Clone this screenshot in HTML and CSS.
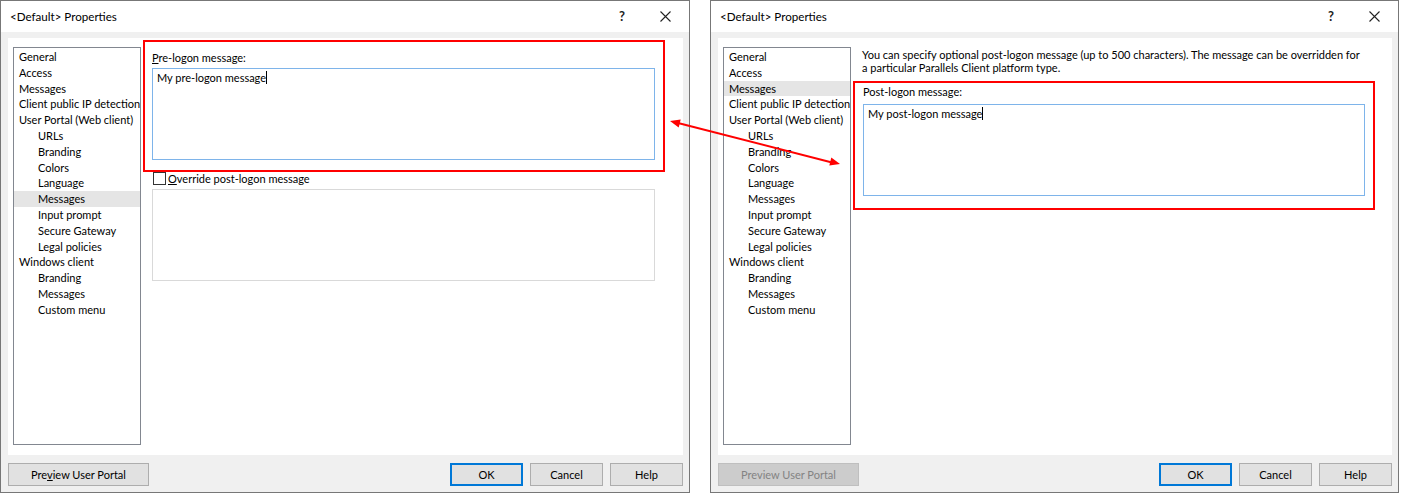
FILE: index.html
```html
<!DOCTYPE html>
<html lang="en">
<head>
    <meta charset="UTF-8">
    <title>&lt;Default&gt; Properties</title>
    <link rel="stylesheet" href="styles.css">
</head>
<body>
    <div class="screen">
        <!-- first dialog: Web client messages page -->
        <div class="dialog dialog-left">
            <div class="titlebar">
                <span class="title">&lt;Default&gt; Properties</span>
                <span class="help-glyph">?</span>
                <svg class="close-glyph" width="11" height="11" viewBox="0 0 11 11">
                    <path d="M0.5 0.5 L10.5 10.5 M10.5 0.5 L0.5 10.5" stroke="#222" stroke-width="1.1" fill="none"/>
                </svg>
            </div>
            <div class="body">
                <div class="page">
                    <ul class="nav">
                        <li>General</li>
                        <li>Access</li>
                        <li>Messages</li>
                        <li>Client public IP detection</li>
                        <li>User Portal (Web client)</li>
                        <li class="sub">URLs</li>
                        <li class="sub">Branding</li>
                        <li class="sub">Colors</li>
                        <li class="sub">Language</li>
                        <li class="sub selected">Messages</li>
                        <li class="sub">Input prompt</li>
                        <li class="sub">Secure Gateway</li>
                        <li class="sub">Legal policies</li>
                        <li>Windows client</li>
                        <li class="sub">Branding</li>
                        <li class="sub">Messages</li>
                        <li class="sub">Custom menu</li>
                    </ul>
                    <div class="content">
                        <div class="highlight">
                            <div class="field-label"><u>P</u>re-logon message:</div>
                            <div class="memo active"><span class="caret">My pre-logon message</span></div>
                        </div>
                        <label class="check-row">
                            <span class="checkbox"></span>
                            <span><u>O</u>verride post-logon message</span>
                        </label>
                        <div class="memo disabled"></div>
                    </div>
                </div>
            </div>
            <div class="footer">
                <button class="btn btn-wide">Pre<u>v</u>iew User Portal</button>
                <div class="btn-group">
                    <button class="btn btn-default">OK</button>
                    <button class="btn">Cancel</button>
                    <button class="btn">Help</button>
                </div>
            </div>
        </div>

        <!-- second dialog: Messages page -->
        <div class="dialog dialog-right">
            <div class="titlebar">
                <span class="title">&lt;Default&gt; Properties</span>
                <span class="help-glyph">?</span>
                <svg class="close-glyph" width="11" height="11" viewBox="0 0 11 11">
                    <path d="M0.5 0.5 L10.5 10.5 M10.5 0.5 L0.5 10.5" stroke="#222" stroke-width="1.1" fill="none"/>
                </svg>
            </div>
            <div class="body">
                <div class="page">
                    <ul class="nav">
                        <li>General</li>
                        <li>Access</li>
                        <li class="selected">Messages</li>
                        <li>Client public IP detection</li>
                        <li>User Portal (Web client)</li>
                        <li class="sub">URLs</li>
                        <li class="sub">Branding</li>
                        <li class="sub">Colors</li>
                        <li class="sub">Language</li>
                        <li class="sub">Messages</li>
                        <li class="sub">Input prompt</li>
                        <li class="sub">Secure Gateway</li>
                        <li class="sub">Legal policies</li>
                        <li>Windows client</li>
                        <li class="sub">Branding</li>
                        <li class="sub">Messages</li>
                        <li class="sub">Custom menu</li>
                    </ul>
                    <div class="content">
                        <p class="intro">You can specify optional post-logon message (up to 500 characters). The message can be overridden for<br>a particular Parallels Client platform type.</p>
                        <div class="highlight highlight-tight">
                            <div class="field-label">Post-logon message:</div>
                            <div class="memo active"><span class="caret">My post-logon message</span></div>
                        </div>
                    </div>
                </div>
            </div>
            <div class="footer">
                <button class="btn btn-wide" disabled>Preview User Portal</button>
                <div class="btn-group">
                    <button class="btn btn-default">OK</button>
                    <button class="btn">Cancel</button>
                    <button class="btn">Help</button>
                </div>
            </div>
        </div>

        <!-- annotation arrow between the two dialogs -->
        <svg class="arrow" width="1402" height="495" viewBox="0 0 1402 495">
            <line x1="679" y1="123.3" x2="831" y2="162.2" stroke="#f00" stroke-width="2"/>
            <polygon points="670,121 678.7,127.4 680.7,119.6" fill="#f00"/>
            <polygon points="840,164 829.3,165.4 831.3,157.6" fill="#f00"/>
        </svg>
    </div>
</body>
</html>
```

FILE: styles.css
```css
* {
    box-sizing: border-box;
}

body {
    margin: 0;
    background: #fff;
    font-family: Lato, 'Segoe UI', sans-serif;
    font-size: 11px;
    color: #000;
}

.screen {
    position: relative;
    width: 1402px;
    height: 495px;
    display: flex;
    gap: 20px;
}

.dialog {
    height: 493px;
    border: 1px solid #777;
    background: #f0f0f0;
    display: flex;
    flex-direction: column;
}

.dialog-left {
    width: 690px;
}

.dialog-right {
    width: 689px;
}

.titlebar {
    height: 31px;
    background: #fff;
    display: flex;
    align-items: center;
    padding: 0 0 1px 9px;
    font-size: 11.6px;
}

.title {
    flex: 1;
}

.help-glyph {
    font-size: 13px;
    font-weight: 700;
    color: #222;
    width: 12px;
    text-align: center;
}

.close-glyph {
    margin: 0 18px 0 32px;
}

.body {
    flex: 1;
    padding: 6px 6px 0 7px;
}

.page {
    height: 417px;
    background: #fff;
    display: flex;
    align-items: flex-start;
    padding: 2px 0 0 5px;
}

.nav {
    list-style: none;
    margin: 7px 0 0 0;
    padding: 1px 0 0 0;
    width: 128px;
    height: 398px;
    border: 1px solid #828790;
    line-height: 15.8px;
    white-space: nowrap;
    overflow: hidden;
}

.nav li {
    padding-left: 5px;
}

.nav li.sub {
    padding-left: 24px;
}

.nav li.selected {
    background: #e5e5e5;
}

.content {
    margin-left: 2px;
    width: 522px;
}

.highlight {
    border: 2px solid #f00;
    padding: 8px 8px 10px 7px;
}

.highlight-tight {
    padding: 1px 8px 12px 8px;
}

.field-label {
    line-height: 15px;
    margin-bottom: 3px;
}

.highlight-tight .field-label {
    margin-bottom: 5px;
}

.memo {
    height: 92px;
    background: #fff;
    padding: 1px 4px;
    line-height: 15px;
}

.memo.active {
    border: 1px solid #7eb4ea;
}

.memo.disabled {
    border: 1px solid #d9d9d9;
    margin-left: 9px;
    width: 503px;
}

.caret {
    border-right: 1px solid #000;
}

.check-row {
    display: flex;
    align-items: center;
    gap: 2px;
    height: 13px;
    margin: 0 0 4px 10px;
}

.checkbox {
    width: 13px;
    height: 13px;
    border: 1px solid #333;
    background: #fff;
}

.intro {
    margin: 8px 0 7px 9px;
    line-height: 13px;
    white-space: nowrap;
}

.footer {
    height: 37px;
    display: flex;
    align-items: flex-start;
    justify-content: space-between;
    padding: 8px 6px 0 7px;
}

.btn-group {
    display: flex;
    gap: 7px;
}

.btn {
    width: 73px;
    height: 23px;
    border: 1px solid #adadad;
    background: #e1e1e1;
    font-family: inherit;
    font-size: 11px;
    color: #000;
    padding: 0;
}

.btn-wide {
    width: 141px;
}

.btn-default {
    border-color: #0078d7;
    box-shadow: inset 0 0 0 1px #0078d7;
}

.btn:disabled {
    background: #cccccc;
    border-color: #bfbfbf;
    color: #838383;
}

.arrow {
    position: absolute;
    left: 0;
    top: 0;
    pointer-events: none;
}
```
